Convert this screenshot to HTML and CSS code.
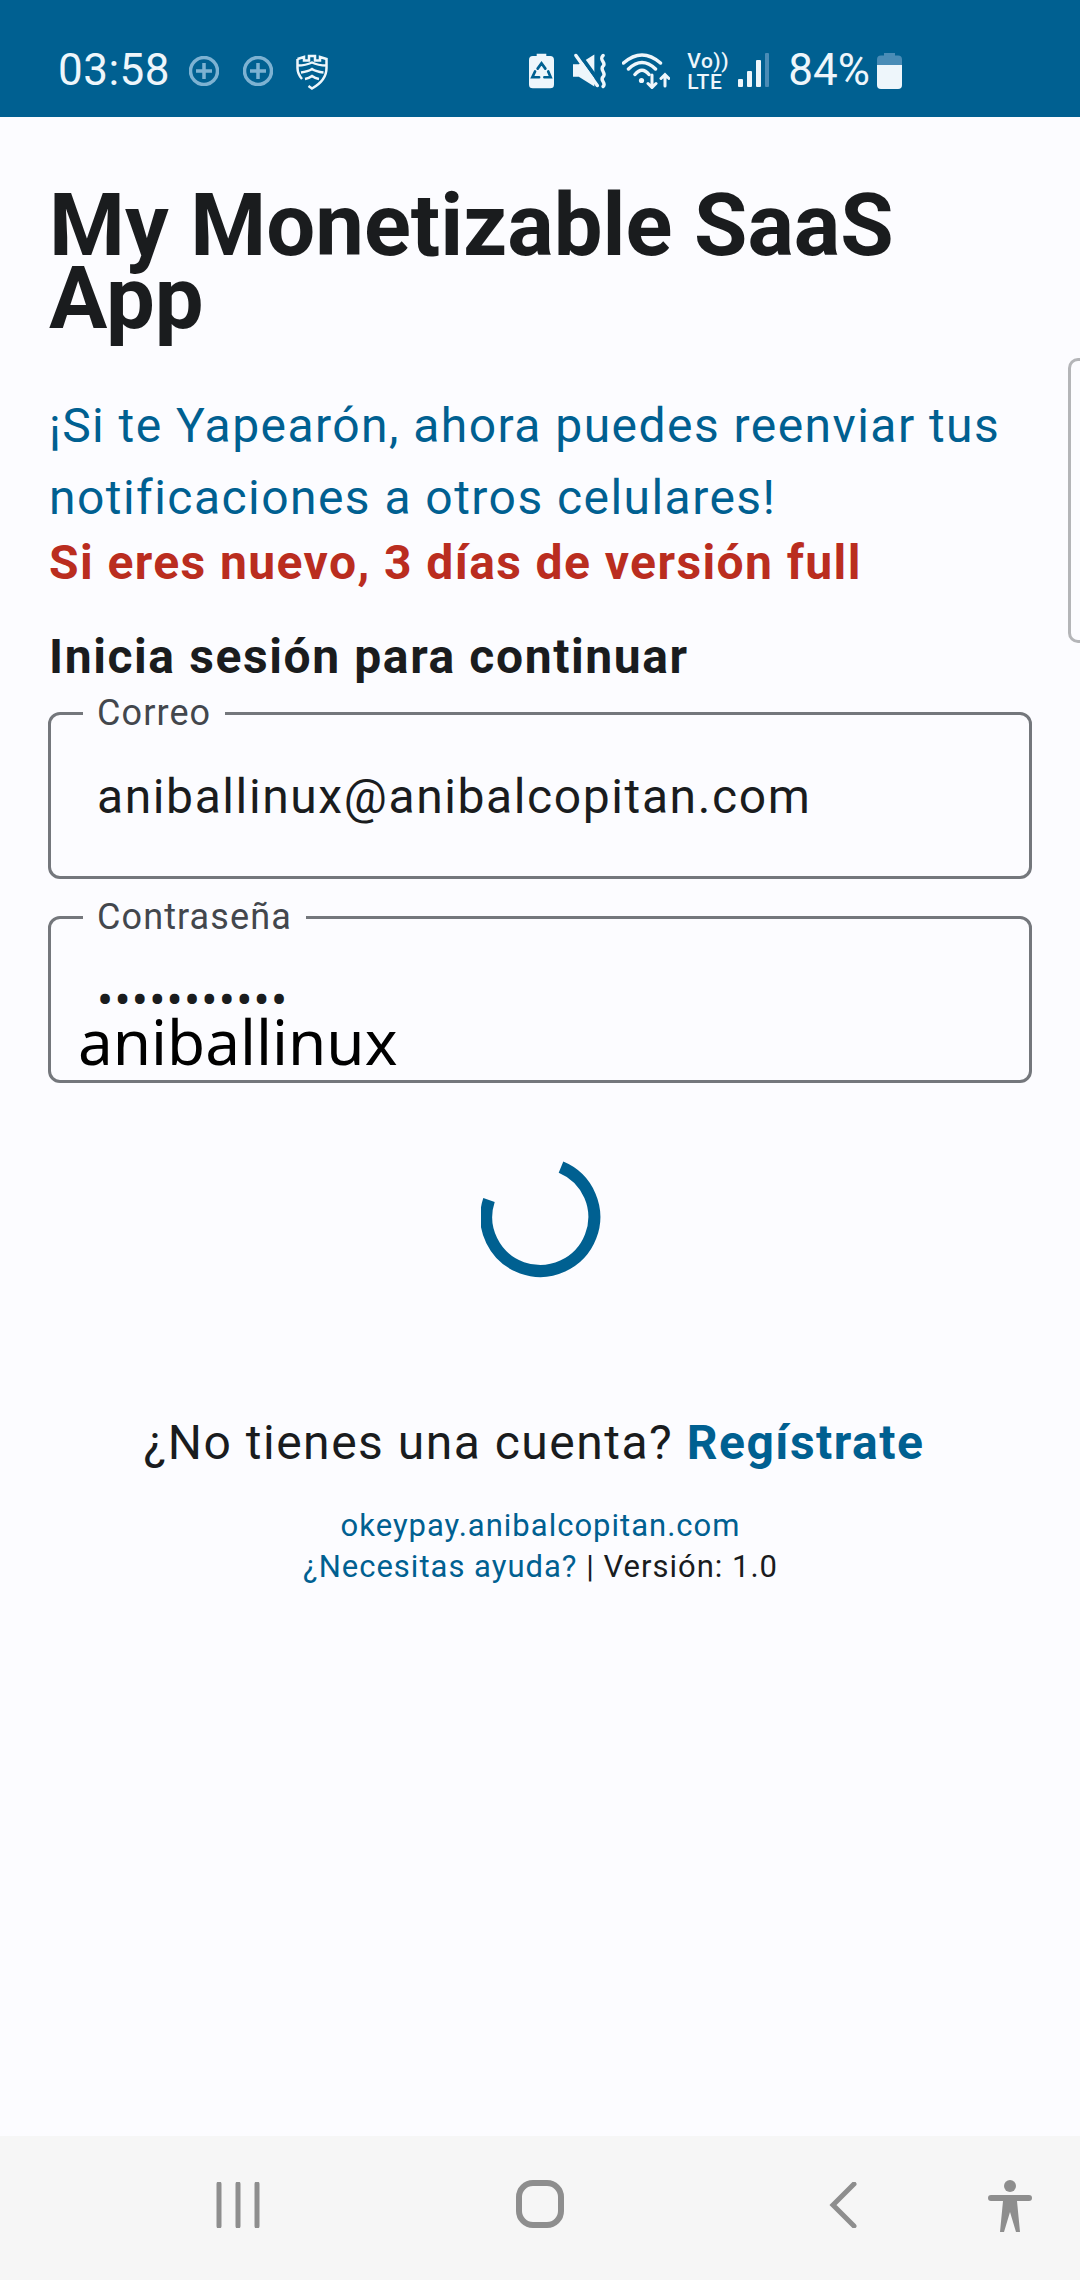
FILE: index.html
```html
<!DOCTYPE html>
<html lang="es">
<head>
  <meta charset="UTF-8" />
  <meta name="viewport" content="width=device-width, initial-scale=1.0" />
  <title>My Monetizable SaaS App</title>
  <link rel="stylesheet" href="styles.css">
</head>
<body>

  <header class="status-bar">
    <div class="status-left">
      <span class="clock">03:58</span>
      <svg class="icon-plus" viewBox="0 0 30 30"><circle cx="15" cy="15" r="13.5"/><path d="M15 7v16M7 15h16"/></svg>
      <svg class="icon-plus" viewBox="0 0 30 30"><circle cx="15" cy="15" r="13.5"/><path d="M15 7v16M7 15h16"/></svg>
      <svg class="icon-shield" viewBox="0 0 32 36"><path d="M1.500 5 L8 3 V6.500 H13 V2 H19 V6.500 H24 V3 L30.500 5 V14 C30.500 23 24 30 16 34.500 L12.500 32 M1.500 5 V14 C1.500 18 3 21.500 6 25 M1.500 11.500 C7 11.500 12 10.500 16 8.500 C20 10.500 25 11.500 30.500 11.500 M5 18.500 C9 18 13 17 16 15 C19 17 23 18 27.500 18.500 M9 25 C12 24.500 14 23.500 16 22 C18 23.500 20 24.500 23 25"/></svg>
    </div>
    <div class="status-right">
      <svg class="icon-saver" viewBox="0 0 26 36"><path d="M8 0h10v2.500h4a4 4 0 0 1 4 4V32a4 4 0 0 1-4 4H4a4 4 0 0 1-4-4V6.500a4 4 0 0 1 4-4h4z"/><path class="cut" d="M9 15.500l4-5.500 4 5.500M20 18.500l2.500 6H16M10.500 24.500H3.500l2.800-6"/></svg>
      <svg class="icon-mute" viewBox="0 0 34 36"><path d="M0 11h6L22 1v33L6 24H0z"/><path class="gap" d="M6 0l26 36"/><path class="line" d="M3 2l22 31M31 2c-5 5 4 7 0 11s4 7 0 11 4 6 0 10"/></svg>
      <svg class="icon-wifi" viewBox="0 0 48 36"><path class="line" d="M1.500 10Q20-6 38.500 10M6.500 16Q20 3 33.500 16M13 21.500Q20 13 27 21.500"/><circle cx="19.500" cy="27.500" r="2.600"/><path class="line thin" d="M30 22v12M26 30.500l4 4 4-4M43 33V22M39 25.500l4-4 4 4"/></svg>
      <span class="volte">Vo))<br>LTE</span>
      <svg class="icon-signal" viewBox="0 0 32 34"><rect x="0" y="26" width="5" height="8" rx="1"/><rect x="9" y="18" width="5" height="16" rx="1"/><rect x="18" y="7" width="5" height="27" rx="1"/><rect class="dim" x="27" y="0" width="4" height="34" rx="1"/></svg>
      <span class="percent">84%</span>
      <svg class="icon-battery" viewBox="0 0 25 36"><path class="dim" d="M7 0h11v2.500h3a4 4 0 0 1 4 4V12H0V6.500a4 4 0 0 1 4-4h3z"/><path d="M0 12h25v20a4 4 0 0 1-4 4H4a4 4 0 0 1-4-4z"/></svg>
    </div>
  </header>

  <main class="content">
    <h1>My Monetizable SaaS App</h1>
    <p class="promo">¡Si te Yapearón, ahora puedes reenviar tus notificaciones a otros celulares!</p>
    <p class="trial">Si eres nuevo, 3 días de versión full</p>
    <h2>Inicia sesión para continuar</h2>

    <fieldset class="field">
      <legend>Correo</legend>
      <div class="value">aniballinux@anibalcopitan.com</div>
    </fieldset>

    <fieldset class="field">
      <legend>Contraseña</legend>
      <div class="value dots">•••••••••••</div>
      <div class="autofill">aniballinux</div>
    </fieldset>

    <div class="spinner">
      <svg viewBox="0 0 120 120"><path d="M80 6.100A54 54 0 1 1 8 39"/></svg>
    </div>

    <p class="signup">¿No tienes una cuenta? <a href="#">Regístrate</a></p>
    <div class="foot">
      <a href="#">okeypay.anibalcopitan.com</a><br>
      <a href="#">¿Necesitas ayuda?</a> | Versión: 1.0
    </div>
  </main>

  <div class="edge-handle"></div>

  <nav class="nav-bar">
    <svg class="nav-recents" viewBox="0 0 44 46"><path d="M3 2v42M22 2v42M41 2v42"/></svg>
    <svg class="nav-home" viewBox="0 0 48 48"><rect x="3" y="3" width="42" height="42" rx="14"/></svg>
    <svg class="nav-back" viewBox="0 0 28 46"><path d="M25 2L4 23l21 21"/></svg>
    <svg class="nav-access" viewBox="0 0 44 54"><circle cx="22" cy="6" r="6"/><path d="M3 15h38a2.500 2.500 0 0 1 0 6H29l3 31h-4l-6-20-6 20h-4l3-31H3a2.500 2.500 0 0 1 0-6z"/></svg>
  </nav>

</body>
</html>
```

FILE: styles.css
```css
* {
  box-sizing: border-box;
}

body {
  margin: 0;
  width: 1080px;
  height: 2280px;
  position: relative;
  overflow: hidden;
  display: flex;
  flex-direction: column;
  font-family: Roboto, sans-serif;
  background-color: #fcfcff;
  color: #1a1c1e;
}

/* status bar */
.status-bar {
  height: 117px;
  flex: none;
  background-color: #006091;
  color: #eef6fb;
  display: flex;
  justify-content: space-between;
  padding: 48px 178px 0 58px;
}

.status-left,
.status-right {
  display: flex;
  align-items: flex-start;
}

.clock {
  font-size: 44px;
  line-height: 44px;
  letter-spacing: 0.5px;
  margin-right: 19px;
}

.icon-plus {
  width: 30px;
  height: 30px;
  margin: 8px 24px 0 0;
  fill: none;
  stroke: #7db2d2;
  stroke-width: 3.500;
}

.icon-shield {
  width: 32px;
  height: 36px;
  margin: 6px 0 0 -1px;
  fill: none;
  stroke: #eef6fb;
  stroke-width: 2.500;
}

.status-right svg {
  fill: #eef6fb;
  height: 36px;
  margin-top: 5px;
}

.status-right .cut,
.status-right .gap,
.status-right .line {
  fill: none;
  stroke-linecap: round;
}

.status-right .cut {
  stroke: #006091;
  stroke-width: 2.800;
}

.status-right .gap {
  stroke: #006091;
  stroke-width: 4;
}

.status-right .line {
  stroke: #eef6fb;
  stroke-width: 3.500;
}

.status-right .thin {
  stroke-width: 3;
}

.status-right .dim {
  fill: #4a8cb6;
}

.icon-saver {
  width: 25px;
  margin-right: 19px;
}

.icon-mute {
  width: 33px;
  margin-right: 16px;
}

.icon-wifi {
  width: 48px;
  margin-right: 17px;
}

.volte {
  width: 36px;
  margin: 3px 15px 0 0;
  font-size: 21px;
  line-height: 21px;
  font-weight: 500;
  letter-spacing: 0.5px;
  white-space: nowrap;
}

.status-right .icon-signal {
  width: 32px;
  height: 34px;
  margin-right: 18px;
}

.percent {
  font-size: 44px;
  line-height: 44px;
  margin-right: 7px;
}

.icon-battery {
  width: 25px;
}

/* login form */
.content {
  flex: 1;
  padding: 72px 48px 0 49px;
}

h1 {
  margin: 0;
  font-size: 86.800px;
  line-height: 73px;
  font-weight: 700;
}

.promo {
  margin: 55px 0 0;
  font-size: 48px;
  line-height: 72px;
  letter-spacing: 1.450px;
  color: #006091;
}

.trial {
  margin: 1px 0 0;
  font-size: 48px;
  line-height: 56px;
  font-weight: 700;
  letter-spacing: 1.400px;
  color: #ba2d1f;
}

h2 {
  margin: 38px 0 7px;
  font-size: 48px;
  line-height: 56px;
  font-weight: 700;
  letter-spacing: 1.600px;
}

.field {
  position: relative;
  height: 187px;
  margin: 0 0 17px -1px;
  padding: 0 0 0 47px;
  border: 3px solid #74777c;
  border-radius: 12px;
}

legend {
  margin-left: -15px;
  padding: 0 14px;
  font-size: 36px;
  line-height: 42px;
  letter-spacing: 1.100px;
  color: #43474d;
}

.value {
  font-size: 48px;
  line-height: 56px;
  letter-spacing: 1.600px;
  margin-top: 35px;
  margin-left: -1px;
}

.dots {
  margin-top: 35px;
  letter-spacing: 1.200px;
}

.autofill {
  position: absolute;
  left: 27px;
  top: 65px;
  font-family: "Noto Sans", sans-serif;
  font-size: 62px;
  line-height: 76px;
  color: #000;
}

.spinner {
  display: flex;
  justify-content: center;
  margin-top: 78px;
}

.spinner svg {
  width: 120px;
  height: 120px;
  fill: none;
  stroke: #006091;
  stroke-width: 12;
}

.signup {
  margin: 134px 0 0;
  padding-right: 13px;
  text-align: center;
  font-size: 48px;
  line-height: 56px;
  letter-spacing: 1.500px;
}

.signup a {
  color: #006091;
  font-weight: 700;
  text-decoration: none;
}

.foot {
  margin-top: 34px;
  text-align: center;
  font-size: 31px;
  line-height: 41px;
  letter-spacing: 1px;
}

.foot a {
  color: #006091;
  text-decoration: none;
}

/* edge panel handle on the right side */
.edge-handle {
  position: absolute;
  right: 0;
  top: 358px;
  width: 12px;
  height: 285px;
  border: 3px solid #b4b5b8;
  border-right: 0;
  border-radius: 10px 0 0 10px;
}

/* navigation bar */
.nav-bar {
  height: 144px;
  flex: none;
  position: relative;
  background-color: #f6f6f6;
}

.nav-bar svg {
  position: absolute;
  fill: none;
  stroke: #8e8e8e;
}

.nav-recents {
  left: 216px;
  top: 46px;
  width: 44px;
  height: 46px;
  stroke-width: 5;
  stroke-linecap: round;
}

.nav-home {
  left: 516px;
  top: 44px;
  width: 48px;
  height: 48px;
  stroke-width: 6;
}

.nav-back {
  left: 829px;
  top: 46px;
  width: 28px;
  height: 46px;
  stroke-width: 5;
  stroke-linecap: round;
}

.nav-bar .nav-access {
  left: 988px;
  top: 44px;
  width: 44px;
  height: 54px;
  fill: #8e8e8e;
  stroke: none;
}
```
